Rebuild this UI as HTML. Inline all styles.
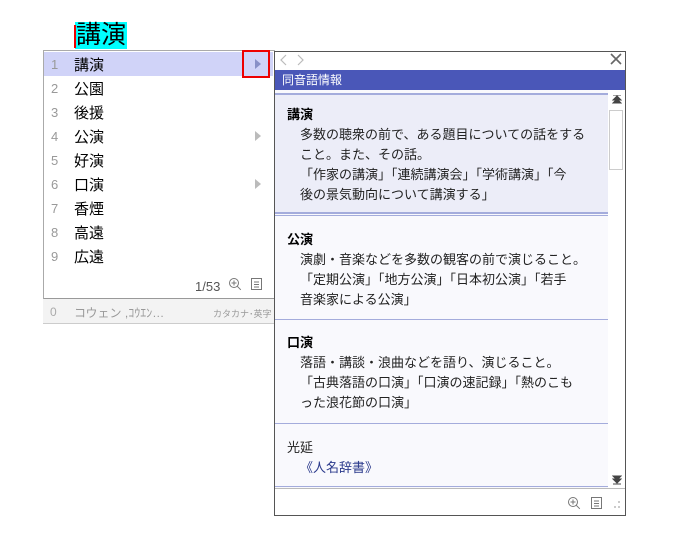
<!DOCTYPE html><html><head><meta charset="utf-8"><style>
body{margin:0;width:681px;height:549px;background:#fff;position:relative;font-family:"Liberation Sans","Noto Sans CJK JP",sans-serif;overflow:hidden}
.a{position:absolute}
.row{position:absolute;left:44px;width:229px;height:24px;font-size:15px;line-height:24px;color:#000}
.row .n{position:absolute;left:7px;top:1px;color:#999;font-size:13px}
.row .w{position:absolute;left:30px;top:2px}
.row .t{position:absolute;left:211px;top:7px;width:0;height:0;border-left:6px solid #bbb;border-top:5px solid transparent;border-bottom:5px solid transparent}
.ent{position:absolute;left:287px;font-size:13px;line-height:20px;color:#222}
.ent b{color:#000}
.ent div{padding-left:13px}
.sep{position:absolute;left:275px;width:333px;height:1px;background:#a4acdc}
</style></head><body>
<div class="a" style="left:75px;top:22px;height:27px;background:#00ffff;font-size:25px;line-height:27px;padding:0 1px;color:#000">講演</div>
<div class="a" style="left:74px;top:25px;width:2px;height:23px;background:#e00"></div>
<div class="a" style="left:43px;top:50px;width:230px;height:247px;border:1px solid #aaa;border-bottom:2px solid #999;background:#fff"></div>
<div class="a" style="left:44px;top:52px;width:229px;height:24px;background:#d0d3f8"></div>
<div class="row" style="top:52px"><span class="n">1</span><span class="w">講演</span><span class="t" style="border-left-color:#8890c8"></span></div>
<div class="row" style="top:76px"><span class="n">2</span><span class="w">公園</span></div>
<div class="row" style="top:100px"><span class="n">3</span><span class="w">後援</span></div>
<div class="row" style="top:124px"><span class="n">4</span><span class="w">公演</span><span class="t"></span></div>
<div class="row" style="top:148px"><span class="n">5</span><span class="w">好演</span></div>
<div class="row" style="top:172px"><span class="n">6</span><span class="w">口演</span><span class="t"></span></div>
<div class="row" style="top:196px"><span class="n">7</span><span class="w">香煙</span></div>
<div class="row" style="top:220px"><span class="n">8</span><span class="w">高遠</span></div>
<div class="row" style="top:244px"><span class="n">9</span><span class="w">広遠</span></div>
<div class="a" style="left:195px;top:279px;font-size:13px;color:#555">1/53</div>
<svg class="a" style="left:228px;top:277px" width="14" height="14" viewBox="0 0 14 14"><circle cx="6" cy="6" r="4.5" fill="none" stroke="#777"/><path d="M6 3.5v5M3.5 6h5M9.3 9.3l3.5 3.5" stroke="#777" fill="none"/></svg>
<svg class="a" style="left:250px;top:277px" width="13" height="14" viewBox="0 0 13 14"><rect x="1.5" y="1.5" width="10" height="11" fill="none" stroke="#777"/><path d="M4 5h5M4 7.5h5M4 10h5" stroke="#777"/></svg>
<div class="a" style="left:43px;top:299px;width:231px;height:24px;background:#f3f3f3;border-bottom:1px solid #ccc"></div>
<div class="a" style="left:50px;top:305px;font-size:12px;color:#aaa">0</div>
<div class="a" style="left:74px;top:304px;font-size:12px;color:#999">コウェン ,ｺｳｴﾝ…</div>
<div class="a" style="left:213px;top:307px;font-size:9px;color:#999">カタカナ･英字</div>
<div class="a" style="left:242px;top:50px;width:24px;height:24px;border:2px solid #e00"></div>
<div class="a" style="left:274px;top:51px;width:350px;height:463px;border:1px solid #555;background:#fff"></div>
<svg class="a" style="left:279px;top:53px" width="30" height="14"><path d="M7 2L2 7l5 5M19 2l5 5-5 5" stroke="#bbb" fill="none" stroke-width="1.2"/></svg>
<svg class="a" style="left:610px;top:53px" width="12" height="12"><path d="M1 1l10 10M11 1L1 11" stroke="#666" stroke-width="1.6"/></svg>
<div class="a" style="left:275px;top:70px;width:350px;height:20px;background:#4a57b8;color:#fff;font-size:12px;line-height:20px"><span style="padding-left:7px">同音語情報</span></div>
<div class="a" style="left:275px;top:90px;width:333px;height:399px;background:#f9f9fd"></div>
<div class="a" style="left:275px;top:93px;width:333px;height:121px;background:#ecedf8"></div>
<div class="sep" style="top:93px;height:2px"></div>
<div class="sep" style="top:212px;height:2px"></div>
<div class="sep" style="top:215px"></div>
<div class="sep" style="top:319px"></div>
<div class="sep" style="top:423px"></div>
<div class="sep" style="top:486px"></div>
<div class="a" style="left:275px;top:488px;width:350px;height:1px;background:#bbb"></div>
<div class="a" style="left:608px;top:91px;width:17px;height:397px;background:#fff"></div>
<svg class="a" style="left:612px;top:95px" width="10" height="10"><path d="M1 0h8M5 1L1 5h8zM5 4L1 8h8z" stroke="#444" fill="#444" stroke-width="1"/></svg>
<div class="a" style="left:609px;top:110px;width:14px;height:60px;border:1px solid #ccc;background:#fff;box-sizing:border-box"></div>
<svg class="a" style="left:612px;top:475px" width="10" height="10"><path d="M1 9h8M5 8L1 4h8zM5 5L1 1h8z" stroke="#444" fill="#444" stroke-width="1"/></svg>
<div class="ent" style="top:105px"><b>講演</b><div>多数の聴衆の前で、ある題目についての話をする</div><div>こと。また、その話。</div><div>「作家の講演」「連続講演会」「学術講演」「今</div><div>後の景気動向について講演する」</div></div>
<div class="ent" style="top:230px"><b>公演</b><div>演劇・音楽などを多数の観客の前で演じること。</div><div>「定期公演」「地方公演」「日本初公演」「若手</div><div>音楽家による公演」</div></div>
<div class="ent" style="top:333px"><b>口演</b><div>落語・講談・浪曲などを語り、演じること。</div><div>「古典落語の口演」「口演の速記録」「熱のこも</div><div>った浪花節の口演」</div></div>
<div class="ent" style="top:438px">光延<div style="color:#2b3a8c">《人名辞書》</div></div>
<svg class="a" style="left:567px;top:496px" width="14" height="14" viewBox="0 0 14 14"><circle cx="6" cy="6" r="4.5" fill="none" stroke="#777"/><path d="M6 3.5v5M3.5 6h5M9.3 9.3l3.5 3.5" stroke="#777" fill="none"/></svg>
<svg class="a" style="left:590px;top:496px" width="13" height="14" viewBox="0 0 13 14"><rect x="1.5" y="1.5" width="10" height="11" fill="none" stroke="#777"/><path d="M4 5h5M4 7.5h5M4 10h5" stroke="#777"/></svg>
<svg class="a" style="left:612px;top:500px" width="10" height="10"><circle cx="7" cy="2" r="1" fill="#bbb"/><circle cx="3" cy="7" r="1" fill="#bbb"/><circle cx="7" cy="7" r="1" fill="#bbb"/></svg>
</body></html>
